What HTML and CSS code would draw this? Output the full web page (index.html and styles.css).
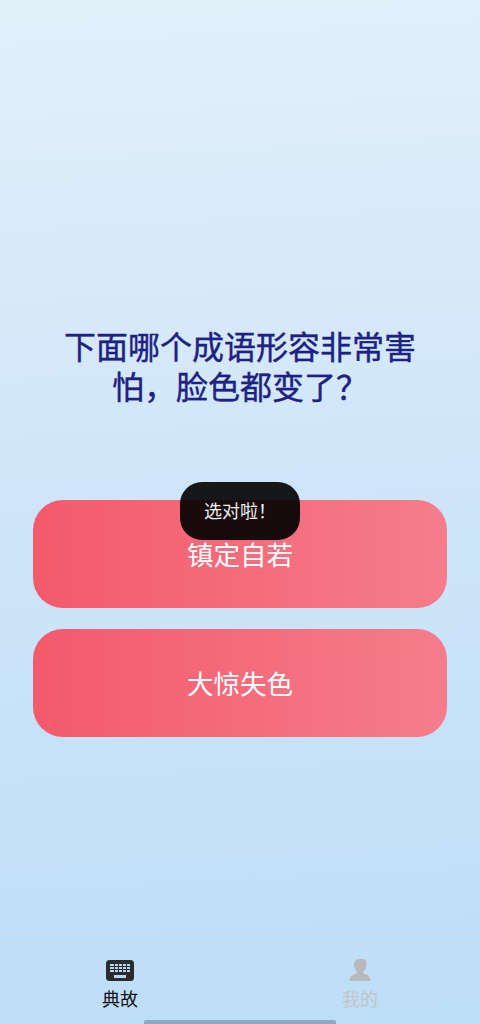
FILE: index.html
```html
<!DOCTYPE html>
<html lang="zh-CN">
<head>
    <meta charset="UTF-8">
    <meta name="viewport" content="width=device-width, initial-scale=1.0">
    <title>典故</title>
    <link rel="stylesheet" href="styles.css">
</head>
<body>
    <div class="screen">
        <div class="quiz">
            <h2 class="question">下面哪个成语形容非常害怕，脸色都变了？</h2>
            <div class="options">
                <button type="button" class="option">镇定自若</button>
                <button type="button" class="option">大惊失色</button>
            </div>
        </div>

        <div class="tabbar">
            <div class="tab active">
                <svg class="tab-icon" viewBox="0 0 28 22" width="28" height="22">
                    <rect x="0" y="0" width="28" height="21" rx="3.5" fill="#2b2b2d"/>
                    <g fill="#b9d6ee">
                        <rect x="4" y="4" width="4" height="2"/>
                        <rect x="9" y="4" width="3" height="2"/>
                        <rect x="13" y="4" width="3" height="2"/>
                        <rect x="17" y="4" width="3" height="2"/>
                        <rect x="21" y="4" width="3" height="2"/>
                        <rect x="4" y="7" width="4" height="2"/>
                        <rect x="9" y="7" width="3" height="2"/>
                        <rect x="13" y="7" width="3" height="2"/>
                        <rect x="17" y="7" width="3" height="2"/>
                        <rect x="21" y="7" width="3" height="2"/>
                        <rect x="4" y="10" width="4" height="2"/>
                        <rect x="9" y="10" width="3" height="2"/>
                        <rect x="13" y="10" width="3" height="2"/>
                        <rect x="17" y="10" width="3" height="2"/>
                        <rect x="21" y="10" width="3" height="2"/>
                        <rect x="8" y="15" width="12" height="3"/>
                    </g>
                </svg>
                <span>典故</span>
            </div>
            <div class="tab">
                <svg class="tab-icon" viewBox="0 0 24 24" width="24" height="24">
                    <path fill="#b9b9bb" d="M12 1c-3 0-6 1-6 5.500 0 3 1 5.500 3 7v1.500c-3 1-7 2.500-8 8h22c-1-5.500-5-7-8-8v-1.500c2.500-1.500 3.500-4.500 3.500-8.500 0-1.500-1-3.500-2.500-4z"/>
                </svg>
                <span>我的</span>
            </div>
        </div>

        <div class="toast">选对啦！</div>
        <div class="home-bar"></div>
    </div>
</body>
</html>
```

FILE: styles.css
```css
* {
    box-sizing: border-box;
}
body {
    margin: 0;
    font-family: "Liberation Sans", "Noto Sans CJK SC", sans-serif;
}
.screen {
    position: relative;
    display: flex;
    flex-direction: column;
    width: 480px;
    height: 1024px;
    overflow: hidden;
    background: linear-gradient(177deg, #e2f0fa 0%, #d0e6f9 45%, #bddef7 100%);
}
.quiz {
    flex: 1;
    padding: 328px 33px 0;
}
.question {
    margin: 0 0 92px;
    padding: 0 30px;
    font-size: 32px;
    font-weight: 400;
    line-height: 40px;
    text-align: center;
    color: #1c2183;
    -webkit-text-stroke: 0.4px #1c2183;
}
.options {
    display: flex;
    flex-direction: column;
    gap: 21px;
}
.option {
    height: 108px;
    padding: 0 0 2px;
    border: none;
    border-radius: 30px;
    background: linear-gradient(90deg, #f35a6c 0%, #f57d8b 100%);
    color: #fff;
    font-family: inherit;
    font-size: 26.500px;
}
.tabbar {
    display: flex;
    height: 81px;
    padding-bottom: 12px;
    flex-shrink: 0;
    border-top: 1px solid rgba(215, 210, 210, 0.5);
}
.tab {
    flex: 1;
    display: flex;
    flex-direction: column;
    align-items: center;
    justify-content: flex-end;
    gap: 6px;
    font-size: 18px;
    line-height: 24px;
    color: #c4c4c6;
}
.tab.active {
    color: #111;
}
.tab-icon {
    display: block;
}
.toast {
    position: absolute;
    left: 180px;
    top: 482px;
    width: 120px;
    height: 58px;
    border-radius: 22px;
    background: rgba(0, 0, 0, 0.9);
    color: #eee;
    font-size: 18px;
    line-height: 60px;
    text-align: center;
}
.home-bar {
    position: absolute;
    left: 144px;
    bottom: 0;
    width: 192px;
    height: 4px;
    background: #8ea9c1;
    border-radius: 2px 2px 0 0;
}
```
